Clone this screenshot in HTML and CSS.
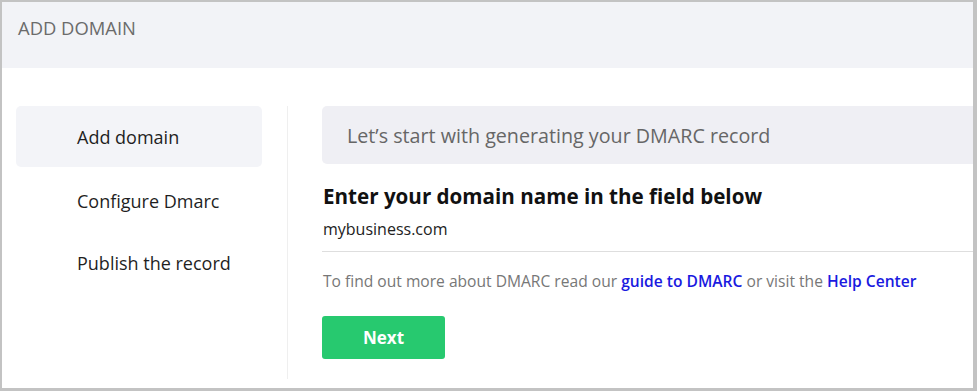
FILE: index.html
```html
<!DOCTYPE html>
<html>
<head>
<meta charset="utf-8">
<link rel="stylesheet" href="styles.css">
</head>
<body>
<div class="frame">
  <div class="header">ADD DOMAIN</div>
  <div class="content">
    <nav class="sidebar">
      <div class="step active">Add domain</div>
      <div class="step">Configure Dmarc</div>
      <div class="step">Publish the record</div>
    </nav>
    <div class="divider"></div>
    <main class="main">
      <div class="banner">Let’s start with generating your DMARC record</div>
      <h2 class="title">Enter your domain name in the field below</h2>
      <div class="field">mybusiness.com</div>
      <p class="info">To find out more about DMARC read our <a href="#">guide to DMARC</a> or visit the <a href="#">Help Center</a></p>
      <button class="next">Next</button>
    </main>
  </div>
</div>
</body>
</html>
```
FILE: styles.css
```css
html, body { margin: 0; padding: 0; background: #fff; }
.frame {
  width: 977px; height: 391px; box-sizing: border-box;
  border-style: solid; border-color: #c3c3c3;
  border-width: 2px 4px 3px 2px;
  overflow: hidden;
  font-family: "Open Sans", sans-serif;
  display: flex; flex-direction: column;
}
.header {
  height: 66px; flex: none;
  background: #f2f3f7;
  padding-left: 16px;
  display: flex; align-items: center;
  font-size: 18.4px; color: #6b6b6b;
  padding-bottom: 15px; box-sizing: border-box;
}
.content { display: flex; flex: 1; padding-top: 38px; }
.sidebar { width: 246px; margin-left: 14px; flex: none; }
.step {
  height: 62px; display: flex; align-items: center;
  padding-left: 61px; font-size: 18px; color: #1f1f1f;
  border-radius: 5px;
}
.step.active { background: #f3f4f8; height: 61px; margin-bottom: 3px; }
.divider { width: 1px; background: #efefef; margin-left: 25px; height: 273px; flex: none; }
.main { padding-left: 34px; flex: none; width: 700px; }
.banner {
  height: 58px; background: #efeff4; border-radius: 5px;
  display: flex; align-items: center; padding-left: 25px;
  font-size: 19.7px; color: #666;
  margin-right: -20px;
}
.title { margin: 19px 0 0 1px; font-size: 20.6px; font-weight: 700; color: #111; line-height: 26px; }
.field {
  margin-top: 9px; padding: 0 0 11px 1px; font-size: 16px; color: #222;
  border-bottom: 1px solid #dedede; line-height: 22px;
}
.info { margin: 19px 0 0 1px; font-size: 15.6px; color: #777; line-height: 20px; }
.info a { color: #1a1ae0; font-weight: 600; text-decoration: none; }
.next {
  margin-top: 25px; width: 123px; height: 43px; border: none; border-radius: 3px;
  background: #27c96f; color: #fff; font-family: "Open Sans", sans-serif;
  font-weight: 700; font-size: 17px; cursor: pointer;
}
```
